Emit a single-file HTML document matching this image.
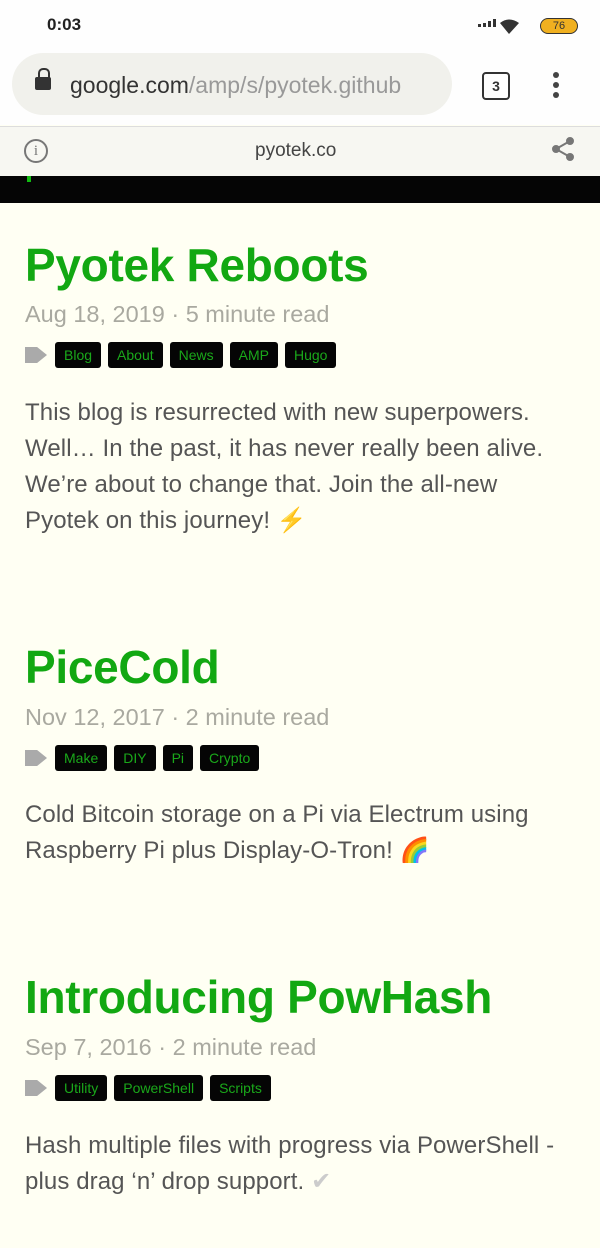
<!DOCTYPE html>
<html><head><meta charset="utf-8"><style>
body{margin:0;width:600px;height:1248px;overflow:hidden;background:#fffff3;font-family:"Liberation Sans",sans-serif;position:relative}
.a{position:absolute}
h1{position:absolute;left:25px;margin:0;font-size:46px;font-weight:bold;color:#12a812;letter-spacing:-0.3px;white-space:nowrap}
.m{position:absolute;left:25px;font-size:23.5px;color:#a9a9a0}
.t{position:absolute;left:25px;display:flex;gap:7px;align-items:center}
.t span{background:#050505;color:#1aa81a;font-size:14px;height:26px;line-height:26px;padding:0 9px;border-radius:3px}
.t i{width:22px;height:16px;margin-right:1px;background:#aaa;clip-path:polygon(0 0,55% 0,100% 50%,55% 100%,0 100%)}
p{position:absolute;left:25px;margin:0;font-size:24px;line-height:36px;color:#555;letter-spacing:0.1px;white-space:nowrap}
</style></head><body>
<div class="a" style="left:0;top:0;width:600px;height:125px;background:#fefefe"></div>
<div class="a" style="left:47px;top:15px;font-size:17px;font-weight:bold;color:#222">0:03</div>
<div class="a" style="left:540px;top:18px;width:36px;height:14px;border:1.5px solid #333;border-radius:8px;background:#f0b020;font-size:11px;text-align:center;line-height:14px;color:#333">76</div>
<svg class="a" style="left:478px;top:16px" width="56" height="20"><g fill="#333"><rect x="0" y="8" width="3" height="3"/><rect x="5" y="7" width="3" height="4"/><rect x="10" y="5" width="3" height="6"/><rect x="15" y="3" width="3" height="8"/><path d="M31 18 L22 7 Q31 0 41 7Z"/></g></svg>
<div class="a" style="left:12px;top:53px;width:440px;height:62px;border-radius:31px;background:#f1f1ec"></div>
<div class="a" style="left:35px;top:77px;width:16px;height:13px;background:#333;border-radius:2px"></div>
<div class="a" style="left:38px;top:68px;width:8px;height:10px;border:2px solid #333;border-bottom:0;border-radius:5px 5px 0 0"></div>
<div class="a" style="left:70px;top:72px;font-size:23px;color:#333;white-space:nowrap">google.com<span style="color:#999">/amp/s/pyotek.github</span></div>
<div class="a" style="left:482px;top:72px;width:24px;height:24px;border:2.5px solid #333;border-radius:4px;font-size:14px;font-weight:bold;text-align:center;line-height:24px;color:#333">3</div>
<div class="a" style="left:553px;top:72px;width:6px;height:6px;background:#444;border-radius:3px;box-shadow:0 10px 0 #444,0 20px 0 #444"></div>
<div class="a" style="left:0;top:126px;width:600px;height:50px;background:#f7f7f2;border-top:1px solid #ddd"></div>
<div class="a" style="left:24px;top:139px;width:20px;height:20px;border:2px solid #777;border-radius:50%;font-size:15px;text-align:center;line-height:20px;color:#777;font-family:'Liberation Serif',serif">i</div>
<div class="a" style="left:255px;top:140px;font-size:19px;color:#444">pyotek.co</div>
<svg class="a" style="left:552px;top:137px" width="24" height="24"><g fill="#777" stroke="#777" stroke-width="2"><circle cx="18" cy="4" r="3"/><circle cx="4" cy="12" r="3"/><circle cx="18" cy="20" r="3"/><path d="M18 4L4 12L18 20" fill="none"/></g></svg>
<div class="a" style="left:0;top:176px;width:600px;height:27px;background:#050505"></div>
<div class="a" style="left:27px;top:176px;width:4px;height:6px;background:#1b1"></div>

<h1 style="top:238px">Pyotek Reboots</h1>
<div class="m" style="top:301px">Aug 18, 2019 · 5 minute read</div>
<div class="t" style="top:342px"><i></i><span>Blog</span><span>About</span><span>News</span><span>AMP</span><span>Hugo</span></div>
<p style="top:395px">This blog is resurrected with new superpowers.<br>Well… In the past, it has never really been alive.<br>We’re about to change that. Join the all-new<br>Pyotek on this journey! <span style="color:#f0c020">⚡</span></p>

<h1 style="top:640px">PiceCold</h1>
<div class="m" style="top:704px">Nov 12, 2017 · 2 minute read</div>
<div class="t" style="top:745px"><i></i><span>Make</span><span>DIY</span><span>Pi</span><span>Crypto</span></div>
<p style="top:797px">Cold Bitcoin storage on a Pi via Electrum using<br>Raspberry Pi plus Display-O-Tron! 🌈</p>

<h1 style="top:970px">Introducing PowHash</h1>
<div class="m" style="top:1034px">Sep 7, 2016 · 2 minute read</div>
<div class="t" style="top:1075px"><i></i><span>Utility</span><span>PowerShell</span><span>Scripts</span></div>
<p style="top:1128px">Hash multiple files with progress via PowerShell -<br>plus drag ‘n’ drop support. <span style="color:#ccc">✔</span></p>
</body></html>
